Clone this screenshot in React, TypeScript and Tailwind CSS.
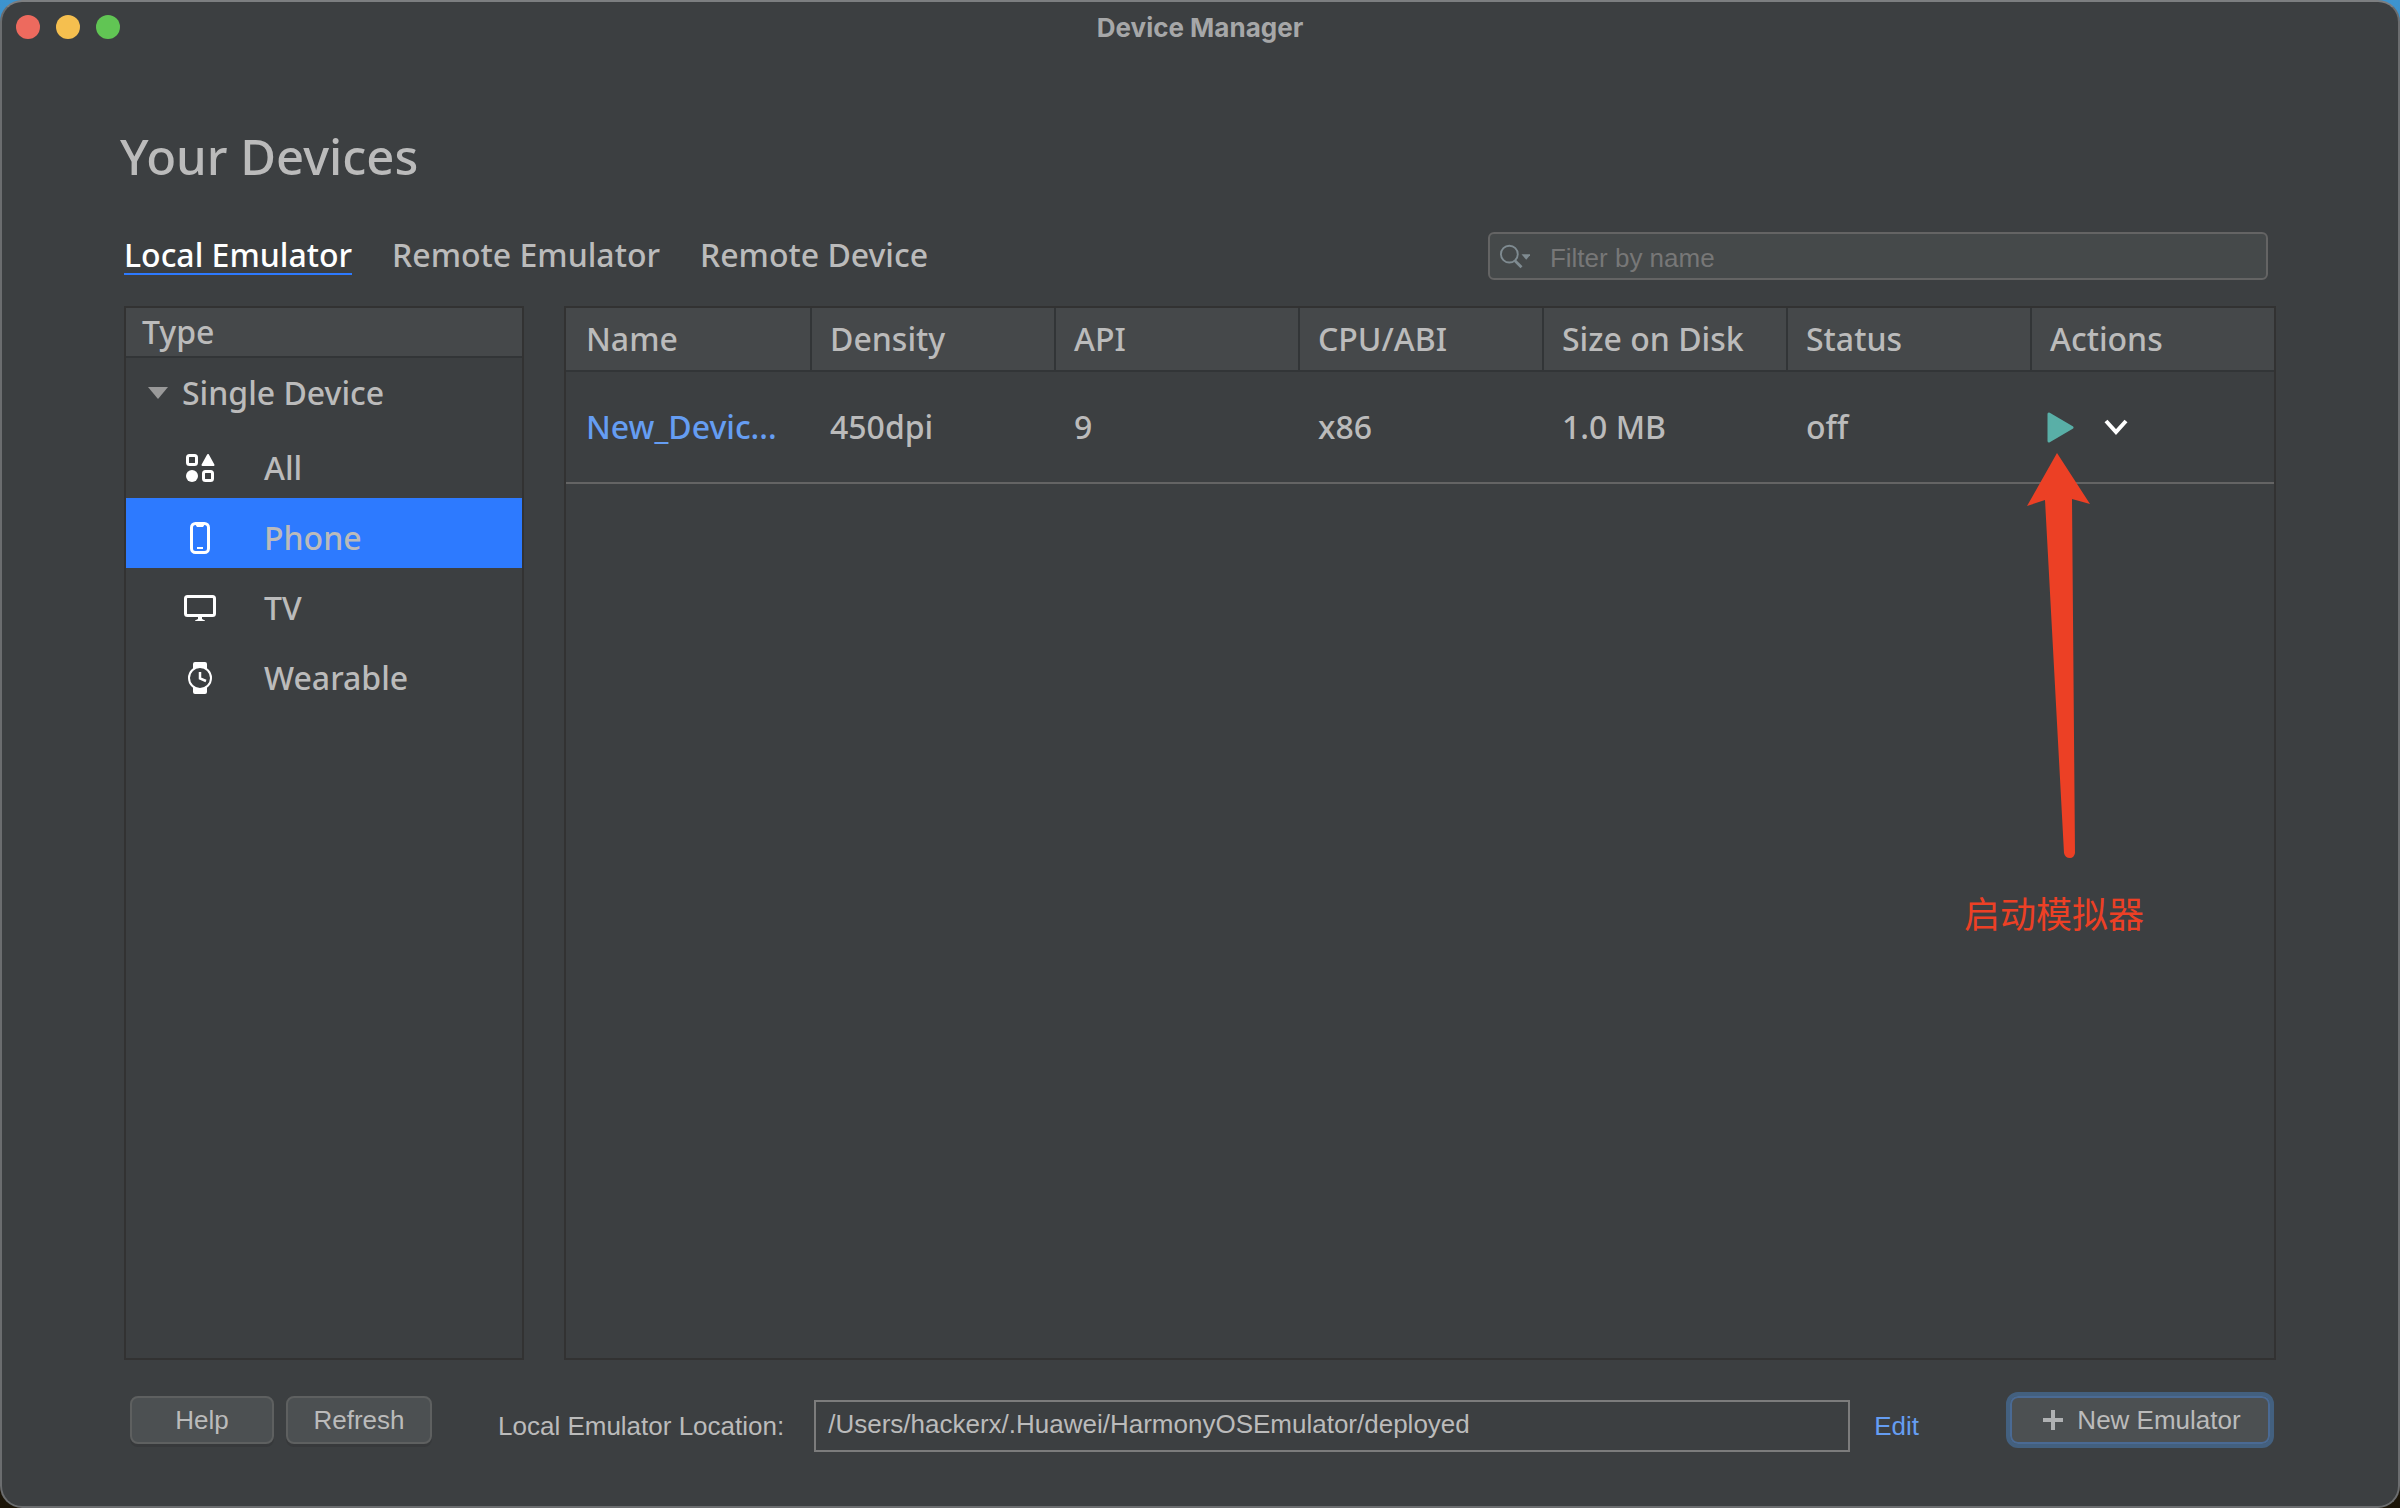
import { useState } from 'react'

const AllIcon = () => (
  <svg width="32" height="32" viewBox="0 0 32 32" fill="none" aria-hidden="true">
    <rect x="3.5" y="3.5" width="9" height="9" rx="2" stroke="#fff" strokeWidth="3" />
    <rect x="19.5" y="19.5" width="9" height="9" rx="2" stroke="#fff" strokeWidth="3" />
    <circle cx="8" cy="24" r="6" fill="#fff" />
    <path d="M24 3L29.5 13H18.5Z" fill="#fff" stroke="#fff" strokeWidth="2" strokeLinejoin="round" />
  </svg>
)

const PhoneIcon = () => (
  <svg width="32" height="32" viewBox="0 0 32 32" fill="none" aria-hidden="true">
    <rect x="7.5" y="1.5" width="17" height="29" rx="4" stroke="#fff" strokeWidth="3" />
    <path d="M11 2H21L19 5H13Z" fill="#fff" />
    <path d="M13 26H19" stroke="#fff" strokeWidth="2" />
  </svg>
)

const TvIcon = () => (
  <svg width="32" height="32" viewBox="0 0 32 32" fill="none" aria-hidden="true">
    <rect x="1.5" y="4.5" width="29" height="19" rx="2" stroke="#fff" strokeWidth="3" />
    <path d="M14 24H18V27L21 28.5V29H11V28.5L14 27Z" fill="#fff" />
  </svg>
)

const WatchIcon = () => (
  <svg width="32" height="32" viewBox="0 0 32 32" fill="none" aria-hidden="true">
    <path d="M9 8V2Q9 0 11 0H21Q23 0 23 2V8ZM9 24V30Q9 32 11 32H21Q23 32 23 30V24Z" fill="#fff" />
    <circle cx="16" cy="16" r="11" fill="#3c3f41" stroke="#fff" strokeWidth="2" />
    <path d="M16 10V16.500L22 19" stroke="#fff" strokeWidth="2.500" />
  </svg>
)

const tabs = ['Local Emulator', 'Remote Emulator', 'Remote Device']

const types = [
  { name: 'All', Icon: AllIcon },
  { name: 'Phone', Icon: PhoneIcon },
  { name: 'TV', Icon: TvIcon },
  { name: 'Wearable', Icon: WatchIcon },
]

const columns = ['Name', 'Density', 'API', 'CPU/ABI', 'Size on Disk', 'Status', 'Actions']

const devices = [
  { name: 'New_Devic...', density: '450dpi', api: '9', abi: 'x86', size: '1.0 MB', status: 'off' },
]

function TitleBar() {
  return (
    <header className="grid h-[50px] grid-cols-[1fr_auto_1fr] items-center px-3.5">
      <div className="flex gap-4">
        <button aria-label="Close" className="size-6 rounded-full bg-[#ed6a5e]" />
        <button aria-label="Minimize" className="size-6 rounded-full bg-[#f5bf4f]" />
        <button aria-label="Zoom" className="size-6 rounded-full bg-[#61c554]" />
      </div>
      <span className="font-[Inter,sans-serif] text-[26px] font-bold text-[#a6a7a8]">Device Manager</span>
    </header>
  )
}

function SearchBox() {
  return (
    <label className="mr-2 flex h-12 w-[780px] items-center gap-5 rounded-md border-2 border-[#646464] bg-[#45494a] pl-2.5">
      <svg width="32" height="28" viewBox="0 0 32 28" fill="none" aria-hidden="true">
        <circle cx="10" cy="12" r="9" stroke="#7f8b91" strokeWidth="2" />
        <path d="M16 19L23 26" stroke="#7f8b91" strokeWidth="3" />
        <path d="M23 12H33L28 18Z" fill="#7f8b91" />
      </svg>
      <input
        type="text"
        aria-label="Filter by name"
        placeholder="Filter by name"
        className="w-full bg-transparent pt-1 text-[26px] outline-none placeholder:text-[#777]"
      />
    </label>
  )
}

function Sidebar() {
  const [selected, setSelected] = useState('Phone')

  return (
    <aside className="w-[400px] shrink-0 border-2 border-[#323232] font-['Noto_Sans',sans-serif] text-[32px] font-medium">
      <h2 className="flex h-[50px] items-center border-b-2 border-[#323537] bg-[#45484a] px-4">Type</h2>
      <button className="flex h-[70px] w-full items-center gap-3.5 pl-[22px]">
        <svg width="20" height="12" viewBox="0 0 20 12" aria-hidden="true">
          <path d="M0 0H20L10 12Z" fill="#999" />
        </svg>
        Single Device
      </button>
      <ul>
        {types.map(({ name, Icon }) => (
          <li key={name}>
            <button
              onClick={() => setSelected(name)}
              className={`flex h-[70px] w-full items-center gap-12 pt-2.5 pl-[58px] ${selected === name ? 'bg-[#2d7aff]' : ''}`}
            >
              <Icon />
              {name}
            </button>
          </li>
        ))}
      </ul>
    </aside>
  )
}

function DeviceTable() {
  const cell = 'h-28 border-b-2 border-[#646464] p-0 pl-5'

  return (
    <section className="relative flex-1 border-2 border-[#323232] font-['Noto_Sans',sans-serif] text-[32px] font-medium">
      <table className="w-full table-fixed border-separate border-spacing-0 text-left">
        <thead>
          <tr className="bg-[#45484a]">
            {columns.map((column) => (
              <th
                key={column}
                className="h-16 border-b-2 border-l-2 border-[#323537] p-0 pl-[18px] font-medium first:border-l-0 first:pl-5"
              >
                {column}
              </th>
            ))}
          </tr>
        </thead>
        <tbody>
          {devices.map((device) => (
            <tr key={device.name}>
              <td className={cell}>
                <a href="#" className="text-[#659df2]">{device.name}</a>
              </td>
              <td className={cell}>{device.density}</td>
              <td className={cell}>{device.api}</td>
              <td className={cell}>{device.abi}</td>
              <td className={cell}>{device.size}</td>
              <td className={cell}>{device.status}</td>
              <td className="h-28 border-b-2 border-[#646464] p-0 pl-4">
                <div className="flex items-center gap-[30px]">
                  <button aria-label="Start emulator">
                    <svg width="28" height="32" viewBox="0 0 28 32" aria-hidden="true">
                      <path d="M3 3V30L26 16.500Z" fill="#59afa7" stroke="#59afa7" strokeWidth="3" strokeLinejoin="round" />
                    </svg>
                  </button>
                  <button aria-label="More actions">
                    <svg width="24" height="16" viewBox="0 0 24 16" fill="none" aria-hidden="true">
                      <path d="M2 2L12 13L22 2" stroke="#fff" strokeWidth="4" />
                    </svg>
                  </button>
                </div>
              </td>
            </tr>
          ))}
        </tbody>
      </table>

      {/* Start hint */}
      <div className="absolute top-[145px] right-[130px] flex w-[180px] flex-col items-center gap-[26px] text-[#ec4025]">
        <svg width="64" height="406" viewBox="0 0 64 406" className="ml-2" aria-hidden="true">
          <path
            d="M31 0L64 51L46 46L49 400Q48 405 44 405Q39 405 38 400L19 47L1 53Z"
            fill="#ec4025"
          />
        </svg>
        <p className="font-['Noto_Sans_CJK_SC',sans-serif] text-[36px] font-normal whitespace-nowrap">启动模拟器</p>
      </div>
    </section>
  )
}

function Footer() {
  const button = 'h-12 rounded-lg border-2 border-[#5e6060] bg-[#4c5052] shadow-[0_3px_0_#37393b]'

  return (
    <footer className="flex h-14 items-center pr-0.5 pl-1.5">
      <button className={`${button} w-36`}>Help</button>
      <button className={`${button} ml-3 w-[146px]`}>Refresh</button>
      <label htmlFor="location" className="ml-[66px] pt-3">Local Emulator Location:</label>
      <input
        id="location"
        readOnly
        defaultValue="/Users/hackerx/.Huawei/HarmonyOSEmulator/deployed"
        className="mt-3 ml-[30px] h-[52px] min-w-0 flex-1 border-2 border-[#7c7c7c] px-3 pb-1 outline-none"
      />
      <a href="#" className="ml-6 pt-3 text-[#659df2]">Edit</a>
      <button className="ml-[87px] flex h-14 w-[268px] items-center justify-center gap-3.5 rounded-xl border-4 border-[#43607f] bg-[#4c5052] pl-1 ring-2 ring-[#4a6a94] ring-inset">
        <svg width="20" height="20" viewBox="0 0 20 20" aria-hidden="true">
          <path d="M10 0V20M0 10H20" stroke="#afb1b3" strokeWidth="4" />
        </svg>
        New Emulator
      </button>
    </footer>
  )
}

export default function App() {
  const [activeTab, setActiveTab] = useState(tabs[0])

  return (
    <div className="min-h-screen bg-linear-to-b from-[#3d94cf] to-[#1c1508]">
      <div className="flex min-h-screen flex-col rounded-[22px] border-2 border-[#6b6d6f] border-t-[#7c7e80] bg-[#3c3f41] font-['Liberation_Sans',Arial,sans-serif] text-[26px] text-[#bbb]">
        <TitleBar />
        <main className="flex flex-1 flex-col px-[122px] pb-[58px]">
          <h1 className="-ml-1 pt-[70px] font-['Noto_Sans',sans-serif] text-[49px] leading-[68px] font-medium">Your Devices</h1>
          <div className="mt-9 flex h-[60px] items-center justify-between">
            <nav className="flex gap-10 font-['Noto_Sans',sans-serif] text-[32px] leading-9 font-medium">
              {tabs.map((tab) => (
                <button
                  key={tab}
                  onClick={() => setActiveTab(tab)}
                  className={`border-b-2 ${activeTab === tab ? 'border-[#2d7aff] text-white' : 'border-transparent'}`}
                >
                  {tab}
                </button>
              ))}
            </nav>
            <SearchBox />
          </div>
          <div className="mt-5 mb-8 flex flex-1 gap-10">
            <Sidebar />
            <DeviceTable />
          </div>
          <Footer />
        </main>
      </div>
    </div>
  )
}
